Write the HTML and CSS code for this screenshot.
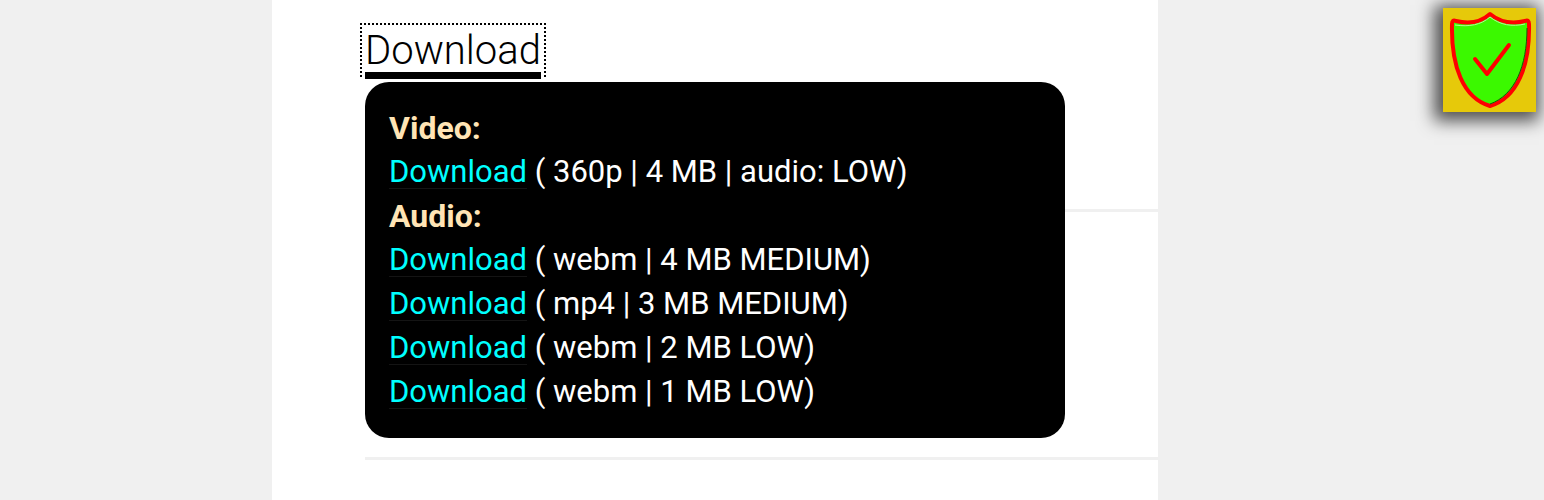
FILE: index.html
```html
<!DOCTYPE html>
<html lang="en">
<head>
<meta charset="utf-8">
<title>Download</title>
<link rel="stylesheet" href="styles.css">
</head>
<body>
<main class="content">
  <section class="entry entry-first">
    <div class="menu">
      <button class="menu-toggle" type="button" aria-expanded="true"><span class="menu-label">Download</span></button>
      <div class="panel">
        <h2 class="group">Video:</h2>
        <p class="row"><a class="link" href="#">Download</a> ( 360p | 4 MB | audio: LOW)</p>
        <h2 class="group">Audio:</h2>
        <p class="row"><a class="link" href="#">Download</a> ( webm | 4 MB MEDIUM)</p>
        <p class="row"><a class="link" href="#">Download</a> ( mp4 | 3 MB MEDIUM)</p>
        <p class="row"><a class="link" href="#">Download</a> ( webm | 2 MB LOW)</p>
        <p class="row"><a class="link" href="#">Download</a> ( webm | 1 MB LOW)</p>
      </div>
    </div>
  </section>
  <section class="entry"></section>
</main>
<div class="badge">
  <svg class="shield" viewBox="0 0 93 104" role="img" aria-label="Protected">
    <path d="M47 6C58 15 70 16 82 13Q86 11 86 16C87 58 74 90 47 98C20 90 8 58 9 16Q9 11 13 13C25 16 37 15 47 6Z" fill="#3bf900" stroke="#ff0000" stroke-width="4" stroke-linejoin="round"/>
    <path d="M12 17C26 19 38 17 47 9C57 17 69 19 82 16" fill="none" stroke="#b4f79a" stroke-width="1"/>
    <path d="M84 20C84 58 72 87 47 96" fill="none" stroke="#145c08" stroke-width="1"/>
    <path d="M32 51L44 66L66 37" fill="none" stroke="#ff0000" stroke-width="4" stroke-linecap="round" stroke-linejoin="round"/>
  </svg>
</div>
</body>
</html>
```
FILE: styles.css
```css
* {
  box-sizing: border-box;
}

body {
  margin: 0;
  min-height: 100vh;
  display: grid;
  grid-template-columns: 272fr 886fr 386fr;
  background: #f0f0f0;
  color: #000;
  font-family: Roboto, "Liberation Sans", sans-serif;
  overflow: hidden;
}

.content {
  grid-column: 2;
  padding-left: 93px;
  background: #fff;
}

.entry {
  min-height: 248px;
  border-bottom: 3px solid #f0f0f0;
}

.entry-first {
  min-height: 212px;
  padding-top: 23px;
}

.menu {
  position: relative;
}

.menu-toggle {
  display: block;
  height: 54px;
  margin-left: -5px;
  padding: 4px 3px 0;
  border: 2px dotted #000;
  border-bottom: 0;
  background: none;
  color: #000;
  font: 300 40px/43px Roboto, "Liberation Sans", sans-serif;
}

.menu-label {
  display: block;
  border-bottom: 7px solid #000;
}

.panel {
  position: absolute;
  top: 59px;
  left: 0;
  width: 700px;
  max-width: 100%;
  padding: 24px;
  border-radius: 24px;
  background: #000;
  color: #fff;
  font-size: 31px;
  line-height: 44px;
}

.group {
  margin: 0;
  color: #ffe4b5;
  font-size: 32px;
  font-weight: 700;
  line-height: 44px;
}

.row {
  margin: 0;
}

.link {
  display: inline-block;
  color: #00ffff;
  line-height: 32px;
  text-decoration: none;
  border-bottom: 1px solid #141414;
}

.badge {
  position: absolute;
  top: 8px;
  right: 8px;
  width: 93px;
  background: #e6c90a;
  box-shadow: -3px 3px 16px 6px #505050;
}

.shield {
  display: block;
  width: 100%;
}
```
